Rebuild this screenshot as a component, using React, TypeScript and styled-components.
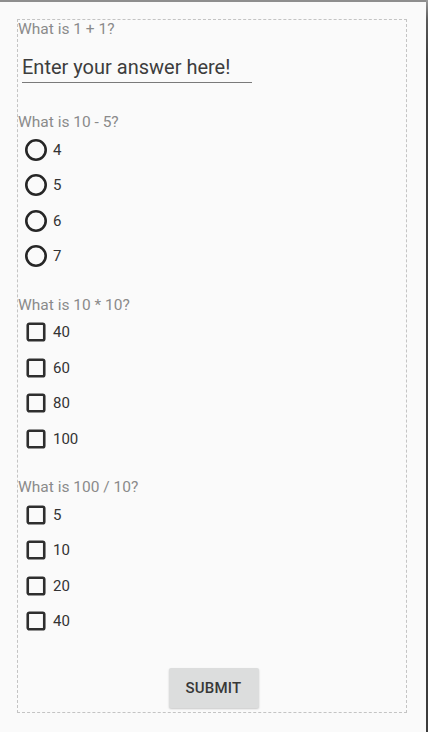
import React from "react";
import styled, { createGlobalStyle } from "styled-components";

const Global = createGlobalStyle`
  html, body { margin: 0; padding: 0; background: #fafafa; }
  body { font-family: Roboto, "Noto Sans", sans-serif; }
`;

const Screen = styled.div`
  display: flex;
  width: 428px;
  height: 732px;
  background: #fafafa;
  overflow: hidden;
`;

const Main = styled.div`
  flex: 1;
  display: flex;
  flex-direction: column;
`;

const TopBar = styled.div`
  height: 2px;
  background: #8e8e8e;
`;

const EdgeStrip = styled.div`
  width: 2px;
  background: linear-gradient(to bottom, #9c9c9c 0px, #5a5a5a 20px, #3e3e3e 60px, #3c3c3c 100%);
`;

const Content = styled.div`
  padding: 17px 0 0 17px;
`;

const FormBox = styled.form`
  box-sizing: border-box;
  width: 390px;
  border: 1px dashed #c4c4c4;
  padding: 0 0 4px 0;
  display: flex;
  flex-direction: column;
`;

const Section = styled.div<{ $top: number }>`
  display: flex;
  flex-direction: column;
  margin-top: ${(p) => p.$top}px;
`;

const Question = styled.div`
  font-size: 15.5px;
  line-height: 18px;
  height: 18px;
  color: #8a8a8a;
  margin-bottom: 1px;
`;

const AnswerInput = styled.input`
  box-sizing: content-box;
  width: 230px;
  height: 24px;
  margin: 16px 0 0 4px;
  padding: 0 0 3px 0;
  border: none;
  border-bottom: 1px solid #7a7a7a;
  background: transparent;
  font-family: Roboto, sans-serif;
  font-size: 20px;
  color: #333;
  outline: none;
  &::placeholder {
    color: #3d3d3d;
    opacity: 1;
  }
`;

const Option = styled.label`
  display: flex;
  align-items: center;
  height: 35.5px;
  cursor: pointer;
`;

const IconSlot = styled.span`
  width: 24px;
  height: 24px;
  margin-left: 6px;
  display: flex;
  align-items: center;
  justify-content: center;
`;

const OptionText = styled.span`
  margin-left: 5px;
  font-size: 15px;
  color: #333;
`;

const ButtonRow = styled.div`
  display: flex;
  justify-content: center;
  padding-left: 3px;
  margin-top: 28.5px;
`;

const SubmitButton = styled.button`
  width: 90px;
  height: 40px;
  border: none;
  border-radius: 2px;
  background: #dcdddd;
  box-shadow: 0 1px 2px rgba(0, 0, 0, 0.2);
  font-family: Roboto, sans-serif;
  font-weight: 500;
  font-size: 15px;
  color: #383838;
  letter-spacing: 0.2px;
  padding: 0;
`;

const RadioIcon = () => (
  <svg width="24" height="24" viewBox="0 0 24 24">
    <circle cx="12" cy="12" r="9.7" fill="none" stroke="#262626" strokeWidth="2.6" />
  </svg>
);

const CheckIcon = () => (
  <svg width="24" height="24" viewBox="0 0 24 24">
    <rect x="3.75" y="3.75" width="16.5" height="16.5" rx="1.6" fill="none" stroke="#2e2e2e" strokeWidth="2.6" />
  </svg>
);

type Q = { q: string; kind: "radio" | "check"; options: string[]; top: number };

const questions: Q[] = [
  { q: "What is 10 - 5?", kind: "radio", options: ["4", "5", "6", "7"], top: 30 },
  { q: "What is 10 * 10?", kind: "check", options: ["40", "60", "80", "100"], top: 21.5 },
  { q: "What is 100 / 10?", kind: "check", options: ["5", "10", "20", "40"], top: 21.5 },
];

export default function App() {
  return (
    <>
      <Global />
      <Screen>
        <Main>
          <TopBar />
          <Content>
            <FormBox onSubmit={(e) => e.preventDefault()}>
              <Section $top={0}>
                <Question>What is 1 + 1?</Question>
                <AnswerInput placeholder="Enter your answer here!" />
              </Section>
              {questions.map((item) => (
                <Section key={item.q} $top={item.top}>
                  <Question>{item.q}</Question>
                  {item.options.map((o) => (
                    <Option key={o}>
                      <IconSlot>{item.kind === "radio" ? <RadioIcon /> : <CheckIcon />}</IconSlot>
                      <OptionText>{o}</OptionText>
                    </Option>
                  ))}
                </Section>
              ))}
              <ButtonRow>
                <SubmitButton type="submit">SUBMIT</SubmitButton>
              </ButtonRow>
            </FormBox>
          </Content>
        </Main>
        <EdgeStrip />
      </Screen>
    </>
  );
}
